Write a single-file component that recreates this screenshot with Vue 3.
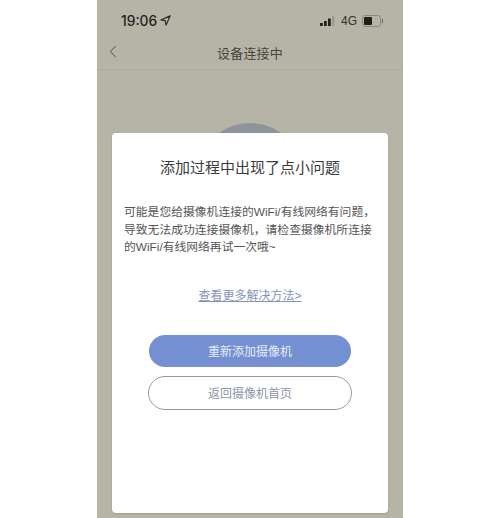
<script setup>
const bodyLines = [
  '可能是您给摄像机连接的WiFi/有线网络有问题，',
  '导致无法成功连接摄像机，请检查摄像机所连接',
  '的WiFi/有线网络再试一次哦~'
]
</script>

<template>
  <div class="page">
    <div class="phone">
      <div class="status">
        <div class="time-wrap">
          <span class="time">19:06</span>
          <svg class="loc" viewBox="0 0 12 12" width="11" height="11">
            <path d="M11 1 L1 5.4 L5.6 6.2 L6.6 11 Z" fill="none" stroke="#2a2a26" stroke-width="1.3" stroke-linejoin="round" />
          </svg>
        </div>
        <div class="right">
          <svg class="bars" viewBox="0 0 15 10" width="15" height="10">
            <rect x="0" y="7" width="2.8" height="3" fill="#24241f" />
            <rect x="4" y="5" width="2.8" height="5" fill="#24241f" />
            <rect x="8" y="2.5" width="2.8" height="7.5" fill="#24241f" />
            <rect x="12" y="0" width="2.4" height="10" fill="#9c9b8f" />
          </svg>
          <span class="net">4G</span>
          <div class="battery"><div class="level"></div></div>
          <div class="cap"></div>
        </div>
      </div>
      <div class="nav">
        <svg class="back" viewBox="0 0 8 14" width="8" height="13">
          <path d="M7 1 L1 7 L7 13" fill="none" stroke="#45453f" stroke-width="1" />
        </svg>
        <span class="nav-title">设备连接中</span>
      </div>
      <div class="content">
        <div class="circle"></div>
      </div>
      <div class="dialog">
        <h2 class="title">添加过程中出现了点小问题</h2>
        <div class="body">
          <p v-for="line in bodyLines" :key="line">{{ line }}</p>
        </div>
        <a class="link">查看更多解决方法&gt;</a>
        <button class="btn primary">重新添加摄像机</button>
        <button class="btn outline">返回摄像机首页</button>
      </div>
    </div>
  </div>
</template>

<style>
html, body { margin: 0; background: #fff; }
</style>

<style scoped>
.page {
  width: 500px;
  height: 518px;
  background: #fff;
  display: flex;
  justify-content: center;
  overflow: hidden;
  font-family: "Liberation Sans", "Noto Sans CJK SC", sans-serif;
}
.phone {
  position: relative;
  width: 306px;
  height: 518px;
  background: #b6b4a7;
}
.status {
  height: 41px;
  padding: 0 20px 0 24px;
  display: flex;
  align-items: center;
  justify-content: space-between;
}
.time-wrap { display: flex; align-items: center; gap: 3px; }
.time { font-family: Inter, "Liberation Sans", sans-serif; font-size: 13.8px; font-weight: 500; color: #24241f; }
.right { display: flex; align-items: center; }
.bars { margin-right: 6px; }
.net { font-size: 12px; color: #33332e; margin-right: 5px; }
.battery {
  width: 15px;
  height: 8px;
  border: 1px solid #8a897d;
  border-radius: 3px;
  padding: 1px;
  box-sizing: content-box;
}
.level { width: 8px; height: 8px; background: #1e1e1a; border-radius: 1px; }
.cap { width: 1px; height: 4px; background: #6d6c62; margin-left: 1px; }
.nav {
  position: relative;
  height: 22px;
  padding-bottom: 6px;
  display: flex;
  align-items: center;
  justify-content: center;
  border-bottom: 1px solid #adab9e;
}
.back { position: absolute; left: 12px; top: 4px; }
.nav-title { font-size: 13px; color: #45453f; letter-spacing: 0.2px; }
.content { display: flex; justify-content: center; padding-top: 53px; }
.circle {
  width: 106px;
  height: 106px;
  border-radius: 50%;
  background: #8e9499;
}
.dialog {
  position: absolute;
  left: 15px;
  top: 133px;
  width: 276px;
  height: 380px;
  background: #fff;
  border-radius: 4px;
  box-shadow: 0 1px 2px rgba(120, 118, 100, 0.35);
  display: flex;
  flex-direction: column;
  align-items: center;
}
.title {
  margin: 25px 0 0;
  font-size: 15px;
  line-height: 20px;
  font-weight: 400;
  color: #3b3b3b;
}
.body {
  align-self: stretch;
  margin-top: 26px;
  padding-left: 12px;
  font-size: 11.8px;
  line-height: 17.5px;
  color: #555;
}
.body p { margin: 0; white-space: nowrap; }
.link {
  margin-top: 31px;
  font-size: 12px;
  line-height: 16px;
  color: #7f95bd;
  text-decoration: underline;
}
.btn {
  font-family: inherit;
  font-size: 12px;
  border-radius: 17px;
  box-sizing: border-box;
  padding: 0;
}
.primary {
  margin-top: 31px;
  width: 202px;
  height: 32px;
  border: none;
  background: #7590d2;
  color: #e6ebf5;
}
.outline {
  margin-top: 9px;
  width: 204px;
  height: 34px;
  border: 1px solid #9a9a9e;
  background: #fff;
  color: #8b95a8;
}
</style>
